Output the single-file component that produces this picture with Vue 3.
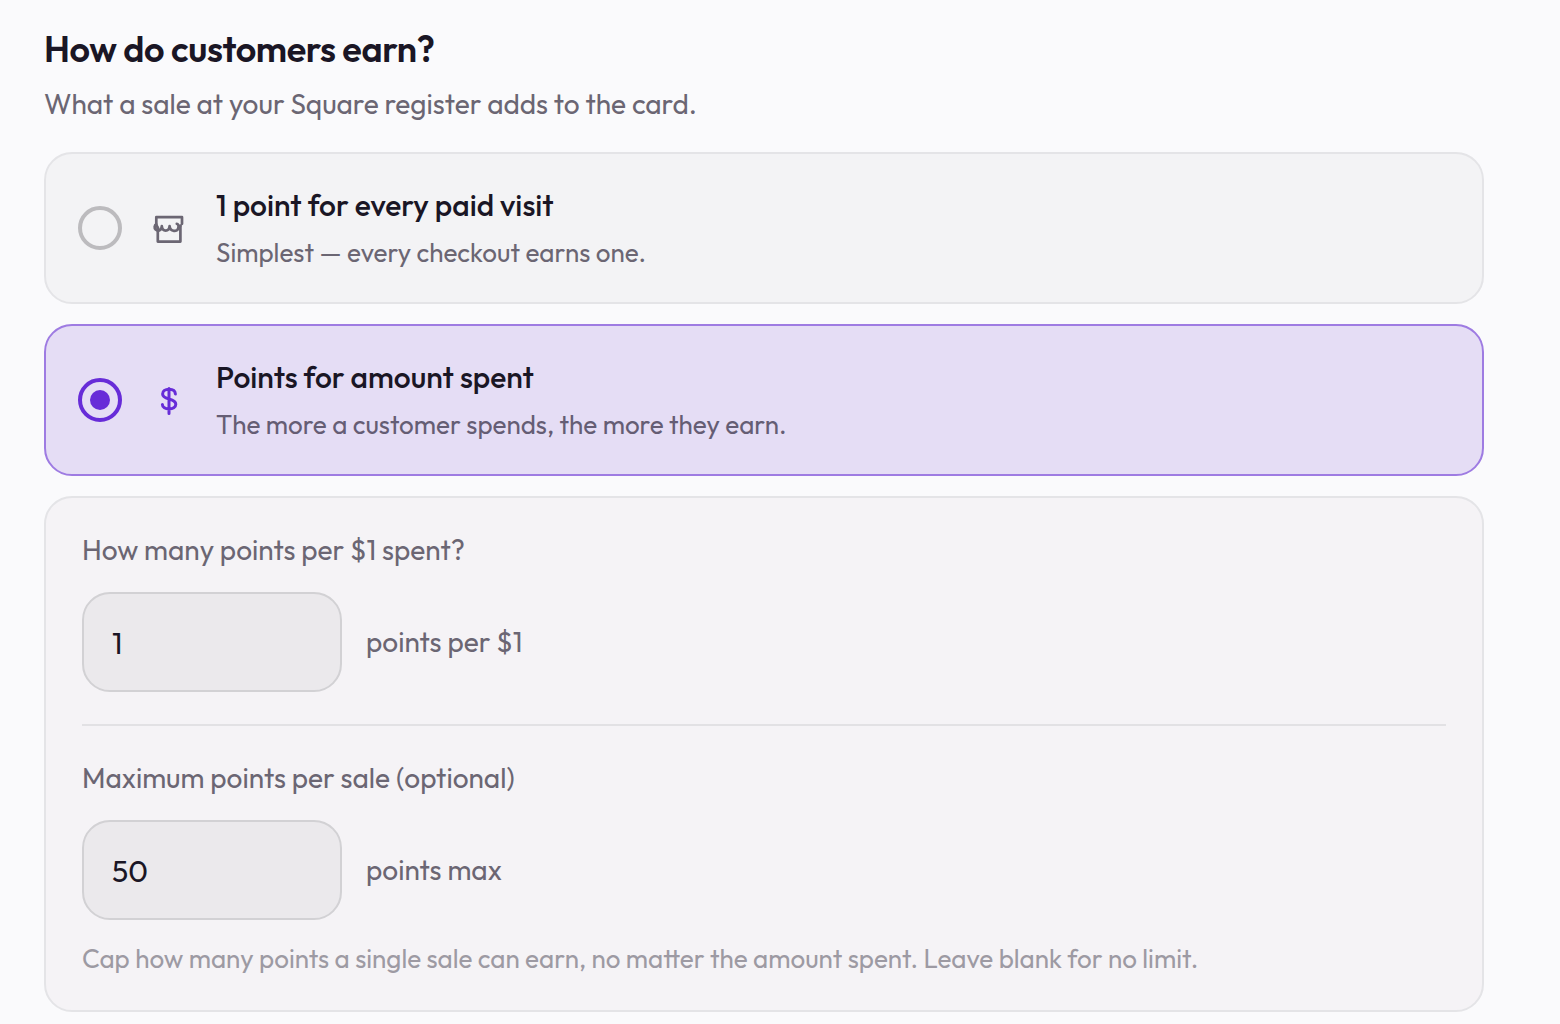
<script setup>
import { ref } from 'vue'

const mode = ref('amount')
const rate = ref('1')
const cap = ref('50')

const options = [
    { id: 'visit', title: '1 point for every paid visit', text: 'Simplest — every checkout earns one.' },
    { id: 'amount', title: 'Points for amount spent', text: 'The more a customer spends, the more they earn.' }
]
</script>

<template>
    <main class="page">
        <h1>How do customers earn?</h1>
        <p class="intro">What a sale at your Square register adds to the card.</p>

        <div class="stack">
            <div v-for="o in options" :key="o.id" class="option" :class="{ selected: mode == o.id }"
                @click="mode = o.id">
                <span class="radio"></span>
                <svg v-if="o.id == 'visit'" class="icon store" viewBox="0 0 34 34">
                    <path d="M4.3 14V6.2H30V12.8M5.8 17V30.6H28.4V15" />
                    <path d="M4.3 13.4C2.4 14 2.1 17.3 3.6 18.6C6 20.8 9.6 19.4 9.8 15.2C10.4 21.2 17 21.2 17.6 15.2C18.2 21.2 25.6 21.2 26.3 17C27 14.6 26 12.8 24.8 12.8M26.3 17L28.4 14.6M4.3 14L6 17" />
                </svg>
                <svg v-else class="icon" viewBox="0 0 34 34">
                    <path d="M17 5.4V30.4M23.4 11C23.2 8 20.6 6.3 17 6.3C13.2 6.3 10.6 8.1 10.6 11C10.6 14.2 13.5 15.1 17 16C20.8 16.9 23.8 18 23.8 21.3C23.8 24.3 20.8 25.9 17 25.9C13.2 25.9 10.4 24.3 10.4 21.6" />
                </svg>
                <div class="copy">
                    <div class="title">{{ o.title }}</div>
                    <div class="text">{{ o.text }}</div>
                </div>
            </div>

            <section class="panel">
                <label class="label" for="rate">How many points per $1 spent?</label>
                <div class="field">
                    <input id="rate" v-model="rate" inputmode="numeric">
                    <span class="unit">points per $1</span>
                </div>
                <hr>
                <label class="label" for="cap">Maximum points per sale (optional)</label>
                <div class="field">
                    <input id="cap" v-model="cap" inputmode="numeric">
                    <span class="unit">points max</span>
                </div>
                <p class="hint">Cap how many points a single sale can earn, no matter the amount spent. Leave blank for no limit.</p>
            </section>
        </div>
    </main>
</template>

<style>
body {
    background: #fafafc;
}
</style>

<style scoped>
.page {
    box-sizing: border-box;
    height: 1024px;
    padding: 27px 76px 0 44px;
    overflow: hidden;
    color: #1a1625;
    font-family: Outfit, Lato, "Liberation Sans", sans-serif;
    white-space: nowrap;
}

h1 {
    margin: 0;
    font-size: 36px;
    font-weight: 600;
    line-height: 44px;
    letter-spacing: -0.36px;
}

.intro {
    margin: 15px 0 30px;
    color: #6b6673;
    font-size: 28px;
    line-height: 36px;
}

.stack {
    display: flex;
    flex-direction: column;
    gap: 20px;
}

.option {
    display: flex;
    align-items: center;
    gap: 30px;
    box-sizing: border-box;
    height: 152px;
    padding: 0 32px;
    border: 2px solid #e4e4e7;
    border-radius: 28px;
    background: #f3f3f5;
    cursor: pointer;
}

.option.selected {
    border-color: #9e7be2;
    background: #e5ddf5;
}

.radio {
    display: grid;
    place-items: center;
    box-sizing: border-box;
    width: 44px;
    height: 44px;
    border: 4px solid #bcbbbe;
    border-radius: 50%;
}

.selected .radio {
    border-color: #672cd8;
}

.selected .radio::after {
    content: "";
    width: 20px;
    height: 20px;
    border-radius: 50%;
    background: #672cd8;
}

.icon {
    width: 34px;
    height: 34px;
    fill: none;
    stroke: #6b6673;
    stroke-width: 3;
    stroke-linecap: round;
    stroke-linejoin: round;
}

.store {
    stroke-width: 2.7;
}

.selected .icon {
    stroke: #672cd8;
}

.copy {
    display: grid;
    gap: 12px;
    padding-bottom: 2px;
}

.title {
    font-size: 30px;
    font-weight: 500;
    line-height: 40px;
}

.text {
    color: #6b6673;
    font-size: 26px;
    line-height: 32px;
}

.selected .text {
    color: #655d74;
}

.panel {
    box-sizing: border-box;
    height: 516px;
    padding: 34px 36px 0;
    border: 2px solid #e4e4e7;
    border-radius: 28px;
    background: #f5f3f6;
}

.label {
    display: block;
    margin-bottom: 24px;
    color: #6b6673;
    font-size: 28px;
    line-height: 36px;
}

.field {
    display: flex;
    align-items: center;
    gap: 24px;
}

input {
    box-sizing: border-box;
    width: 260px;
    height: 100px;
    padding: 2px 28px 0;
    border: 2px solid #d2d1d4;
    border-radius: 28px;
    outline: none;
    background: #ebe9ec;
    color: #1a1625;
    font: 30px Outfit, Lato, "Liberation Sans", sans-serif;
}

.unit {
    color: #6b6673;
    font-size: 28px;
    line-height: 36px;
}

hr {
    height: 2px;
    margin: 32px 0 34px;
    border: 0;
    background: #e2e1e4;
}

.hint {
    margin: 23px 0 0;
    color: #9d9aa3;
    font-size: 26px;
    line-height: 32px;
}
</style>
